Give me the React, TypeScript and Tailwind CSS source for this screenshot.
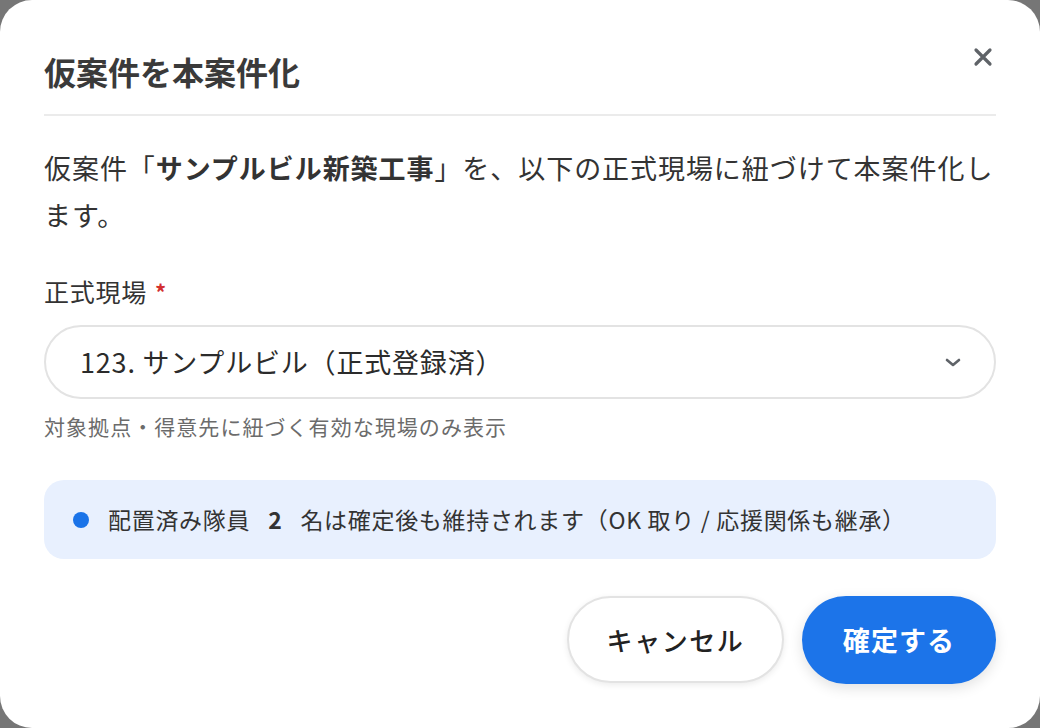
import { useState } from 'react'

export default function App() {
  const [site] = useState('123. サンプルビル（正式登録済）')

  return (
    <main
      className="h-[728px] w-[1040px] bg-[#767676]"
      style={{ fontFamily: '"Noto Sans CJK JP", "Noto Sans", sans-serif' }}
    >
      <div className="flex h-full w-full flex-col rounded-[32px] bg-white px-[44px] pt-[51px] pb-[44px] text-[#333]">
        {/* header */}
        <div className="flex items-start justify-between">
          <h1 className="text-[32px] font-bold leading-[40px] text-[#3a3a3a]">仮案件を本案件化</h1>
          <button className="mt-[-4px] mr-[3px] text-[#5f6368]" aria-label="close">
            <svg width="20" height="20" viewBox="0 0 20 20" fill="none" stroke="currentColor" strokeWidth="3.2" strokeLinecap="round">
              <path d="M3 3 L17 17 M17 3 L3 17" />
            </svg>
          </button>
        </div>
        <div className="mt-[23px] h-[2px] w-full bg-[#ebebeb]" />

        <p className="mt-[28px] text-[27px] leading-[47px] tracking-[0.035em] text-[#333]">
          仮案件「<span className="font-bold">サンプルビル新築工事</span>」を、以下の正式現場に紐づけて本案件化します。
        </p>

        <label className="mt-[37px] flex items-center text-[25px] leading-[32px] tracking-[0.03em] text-[#333]">
          正式現場<span className="ml-[8px] text-[22px] font-bold text-[#d32f2f]">*</span>
        </label>

        <div className="mt-[18px] flex h-[74px] items-center justify-between rounded-full border-2 border-[#e3e3e3] pl-[34px] pr-[32px]">
          <span className="text-[27px] tracking-[0.03em] text-[#2b2b2b]">{site}</span>
          <svg width="18" height="11" viewBox="0 0 18 11" fill="none" stroke="#5f6368" strokeWidth="2.6" strokeLinecap="round" strokeLinejoin="round">
            <path d="M3 3 L9 8 L15 3" />
          </svg>
        </div>

        <p className="mt-[13px] text-[21px] leading-[28px] tracking-[0.05em] text-[#6b6b6b]">
          対象拠点・得意先に紐づく有効な現場のみ表示
        </p>

        <div className="mt-[40px] flex h-[79px] items-center rounded-[20px] bg-[#e8f0fe] pl-[29px]">
          <span className="h-[16px] w-[16px] rounded-full bg-[#1a73e8]" />
          <span className="ml-[19px] text-[23px] tracking-[0.03em] text-[#333]">
            配置済み隊員<span className="mx-[18px] font-bold">2</span>名は確定後も維持されます（OK 取り / 応援関係も継承）
          </span>
        </div>

        <div className="mt-[37px] flex justify-end gap-[18px]">
          <button className="h-[87px] w-[217px] rounded-full border-2 border-[#e3e3e3] bg-white text-[26px] font-medium tracking-[0.06em] text-[#222] shadow-[0_2px_6px_rgba(0,0,0,0.08)]">
            キャンセル
          </button>
          <button className="h-[88px] w-[194px] rounded-full bg-[#1c74e9] text-[27px] font-bold tracking-[0.04em] text-white shadow-[0_4px_14px_rgba(0,0,0,0.12)]">
            確定する
          </button>
        </div>
      </div>
    </main>
  )
}
